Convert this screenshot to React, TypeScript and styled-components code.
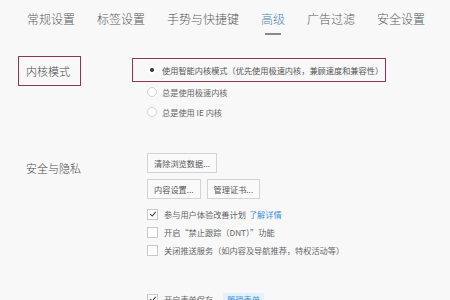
import React from 'react'
import styled, { createGlobalStyle } from 'styled-components'

const GlobalStyle = createGlobalStyle`
  html, body {
    margin: 0;
    padding: 0;
    background: #f8f8f8;
  }
  body {
    font-family: "Noto Sans CJK SC", "Noto Sans", sans-serif;
    color: #555;
  }
`

const Page = styled.div`
  width: 450px;
  height: 300px;
  overflow: hidden;
  background: #f8f8f8;
`

const Tabs = styled.div`
  display: flex;
  gap: 22px;
  padding-left: 27px;
  height: 40px;
`

const Tab = styled.div<{ $active?: boolean }>`
  position: relative;
  font-size: 12px;
  font-weight: 300;
  line-height: 38px;
  color: ${(p) => (p.$active ? '#4a86b8' : '#5a5a5a')};
  white-space: nowrap;

  &::after {
    content: '';
    display: ${(p) => (p.$active ? 'block' : 'none')};
    position: absolute;
    left: 4px;
    right: 4px;
    top: 33px;
    height: 1.5px;
    background: #8a8a8a;
  }
`

const Section = styled.div<{ $top: number }>`
  display: grid;
  grid-template-columns: 132px 1fr;
  margin-top: ${(p) => p.$top}px;
`

const Label = styled.div<{ $marked?: boolean }>`
  align-self: start;
  justify-self: start;
  margin-left: 18px;
  padding: 0 10px 0 7px;
  height: 28px;
  line-height: 28px;
  font-size: 11px;
  font-weight: 300;
  color: #4a4a4a;
  border: 1.5px solid ${(p) => (p.$marked ? '#8e3553' : 'transparent')};
`

const Options = styled.div`
  display: flex;
  flex-direction: column;
`

const MarkedRow = styled.div`
  margin-top: 2px;
  width: 238px;
  height: 22px;
  border: 1.5px solid #8e3553;
  display: flex;
  align-items: center;
  padding-left: 14px;
  box-sizing: content-box;
`

const Row = styled.div<{ $h?: number }>`
  display: flex;
  align-items: center;
  height: ${(p) => p.$h ?? 19}px;
  padding-left: 15px;
  font-size: 8.2px;
  color: #666;
  white-space: nowrap;
`

const Radio = styled.span<{ $checked?: boolean }>`
  width: 8px;
  height: 8px;
  border-radius: 50%;
  border: 1px solid ${(p) => (p.$checked ? '#fff' : '#d2d2d2')};
  background: #fff;
  margin-right: 5px;
  display: flex;
  align-items: center;
  justify-content: center;

  &::before {
    content: '';
    display: ${(p) => (p.$checked ? 'block' : 'none')};
    width: 4px;
    height: 4px;
    border-radius: 50%;
    background: #333;
  }
`

const OptionText = styled.span`
  font-size: 8.2px;
  color: #555;
  white-space: nowrap;
`

const Check = styled.span`
  width: 9px;
  height: 9px;
  border: 1px solid #c9c9c9;
  background: #fff;
  margin-right: 6px;
  display: flex;
  align-items: center;
  justify-content: center;
`

const Buttons = styled.div`
  display: flex;
  gap: 6px;
  padding-left: 15px;
  margin-bottom: 6px;
`

const Btn = styled.div`
  height: 18px;
  line-height: 18px;
  padding: 0 6px;
  border: 1px solid #d3d3d3;
  background: #fafafa;
  font-size: 8.2px;
  color: #555;
`

const Link = styled.span<{ $tag?: boolean }>`
  color: #3a8fd8;
  margin-left: ${(p) => (p.$tag ? 10 : 3)}px;
  padding: ${(p) => (p.$tag ? '0 4px' : '0')};
  background: ${(p) => (p.$tag ? '#e3f1fb' : 'transparent')};
`

const Tick = () => (
  <svg width="8" height="8" viewBox="0 0 8 8">
    <path d="M1.2 4.2 L3.2 6 L6.8 1.8" fill="none" stroke="#444" strokeWidth="1.1" />
  </svg>
)

export default function App() {
  const tabs = ['常规设置', '标签设置', '手势与快捷键', '高级', '广告过滤', '安全设置']
  return (
    <Page>
      <GlobalStyle />
      <Tabs>
        {tabs.map((t) => (
          <Tab key={t} $active={t === '高级'}>
            {t}
          </Tab>
        ))}
      </Tabs>

      <Section $top={16}>
        <Label $marked>内核模式</Label>
        <Options>
          <MarkedRow>
            <Radio $checked />
            <OptionText>使用智能内核模式（优先使用极速内核，兼顾速度和兼容性）</OptionText>
          </MarkedRow>
          <Row $h={20}>
            <Radio />
            总是使用极速内核
          </Row>
          <Row $h={19}>
            <Radio />
            总是使用 IE 内核
          </Row>
        </Options>
      </Section>

      <Section $top={32}>
        <Label>安全与隐私</Label>
        <Options>
          <Buttons>
            <Btn>清除浏览数据...</Btn>
          </Buttons>
          <Buttons>
            <Btn>内容设置...</Btn>
            <Btn>管理证书...</Btn>
          </Buttons>
          <Row $h={18}>
            <Check>
              <Tick />
            </Check>
            参与用户体验改善计划
            <Link>了解详情</Link>
          </Row>
          <Row $h={18}>
            <Check />
            开启“禁止跟踪（DNT）”功能
          </Row>
          <Row $h={18}>
            <Check />
            关闭推送服务（如内容及导航推荐，特权活动等）
          </Row>
        </Options>
      </Section>

      <Section $top={31}>
        <Label>密码与表单</Label>
        <Options>
          <Row $h={18}>
            <Check>
              <Tick />
            </Check>
            开启表单保存
            <Link $tag>管理表单</Link>
          </Row>
        </Options>
      </Section>
    </Page>
  )
}
